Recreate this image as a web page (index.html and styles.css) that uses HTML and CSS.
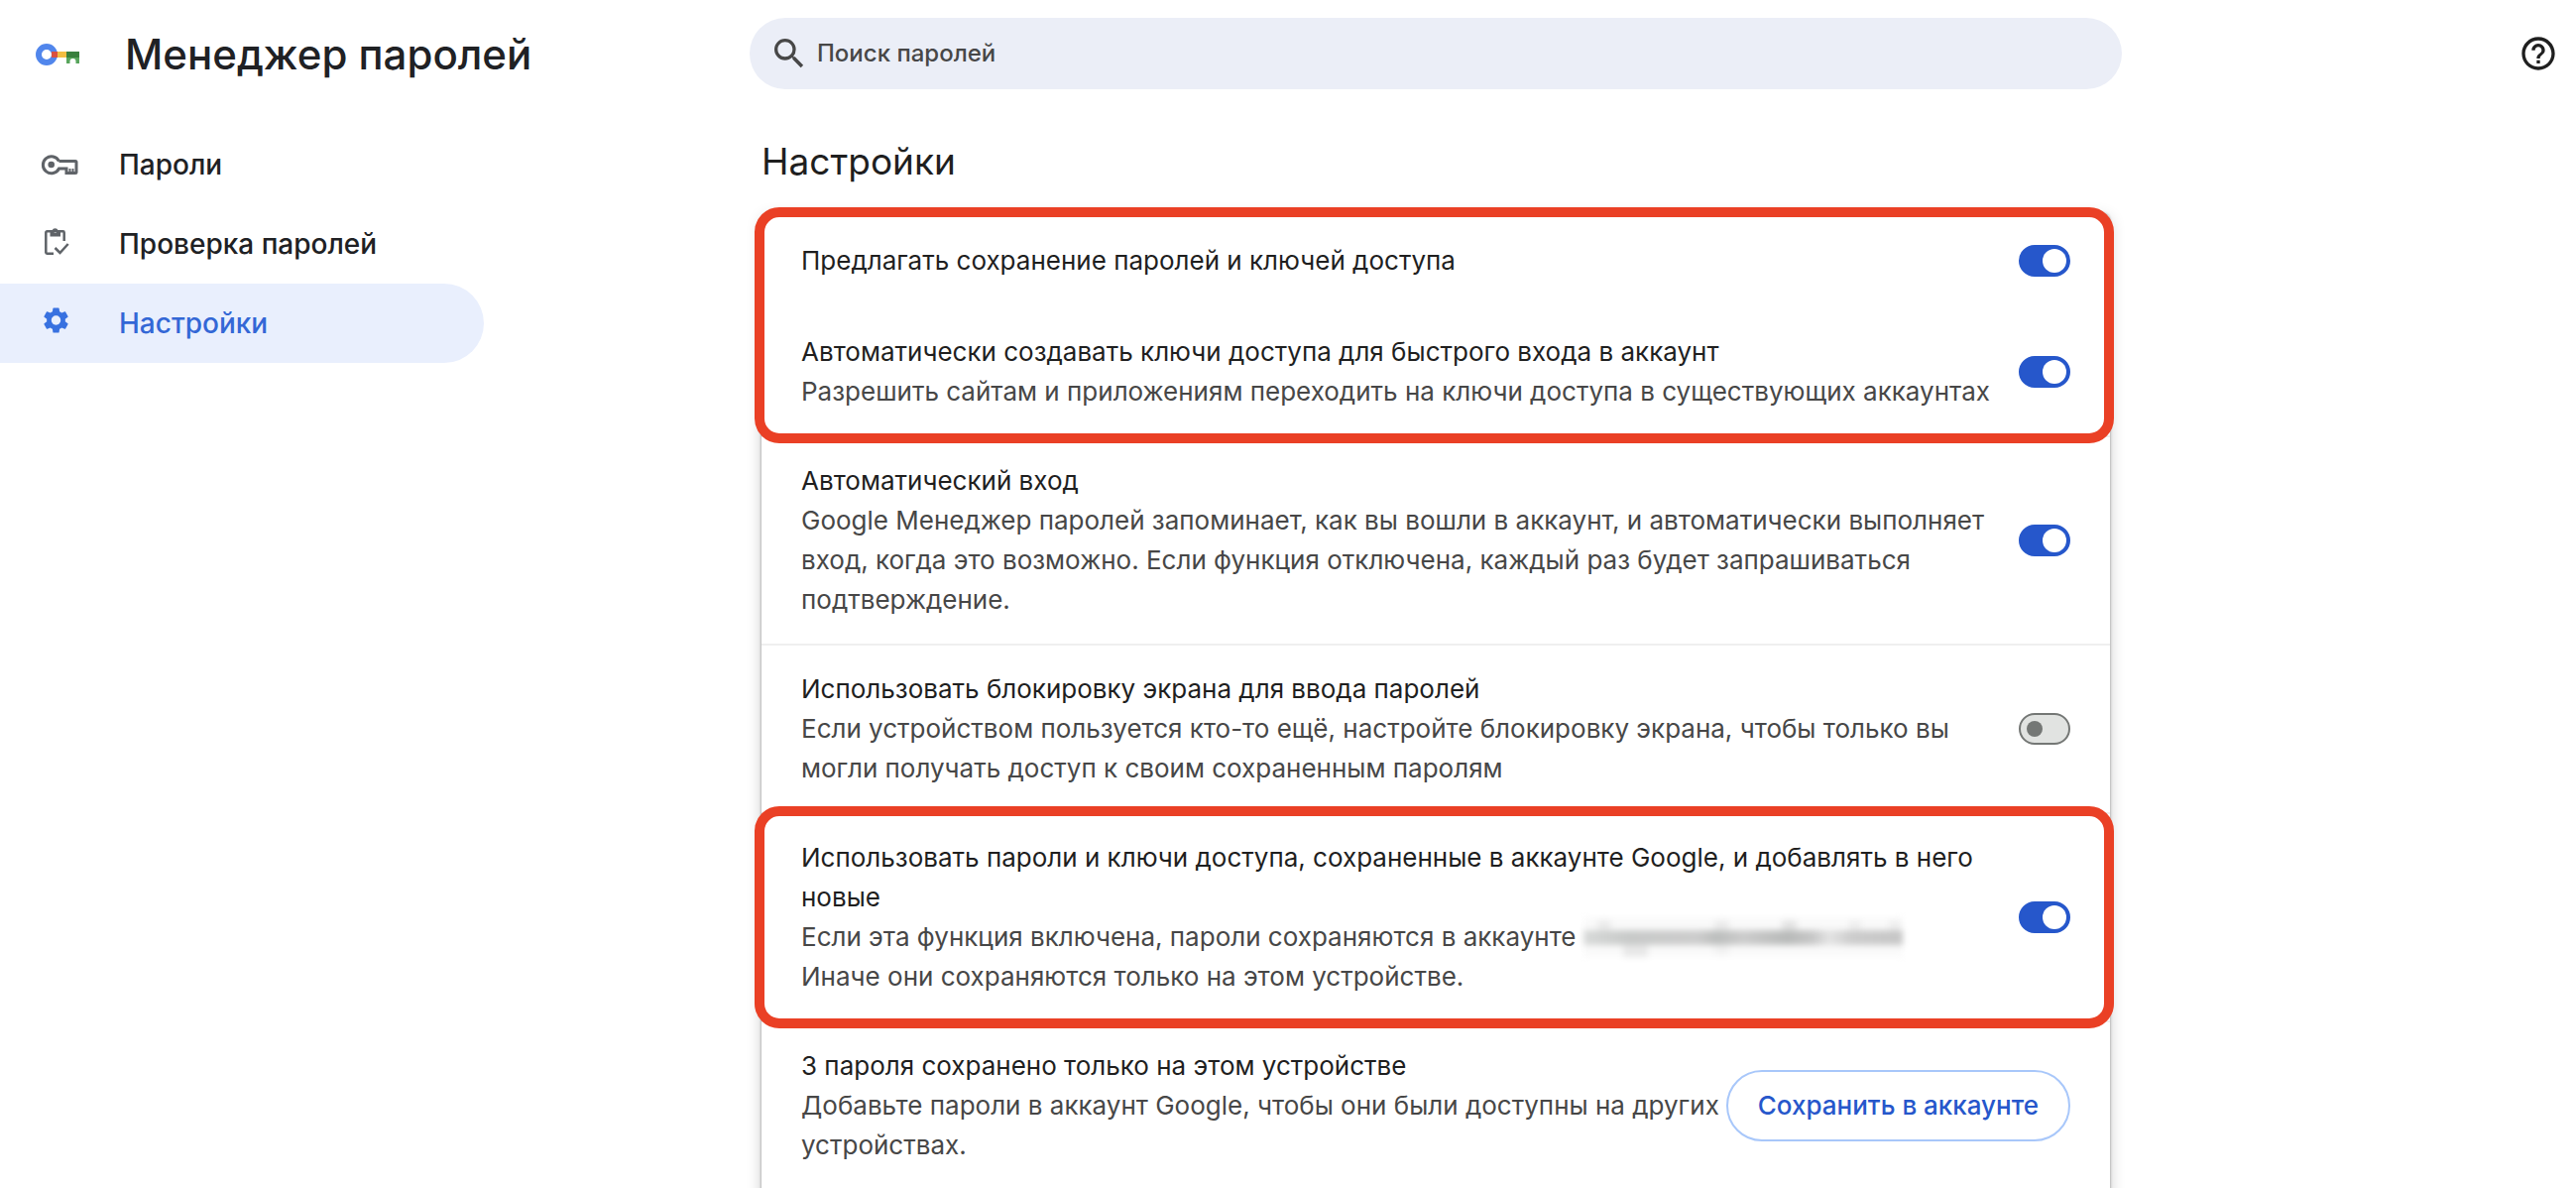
FILE: index.html
```html
<!DOCTYPE html>
<html lang="ru">
<head>
    <meta charset="UTF-8">
    <meta name="viewport" content="width=device-width, initial-scale=1.0">
    <title>Менеджер паролей</title>
    <link rel="stylesheet" href="styles.css">
</head>
<body>
    <header class="toolbar">
        <div class="brand">
            <svg class="logo" viewBox="0 0 44 24" aria-hidden="true">
                <circle cx="11" cy="12" r="8" fill="none" stroke="#5186ec" stroke-width="6"/>
                <path fill="#d95140" d="M16 9h6v6h-6z"/>
                <path fill="#f2bd42" d="M22 9h9.500v6H22z"/>
                <path fill="#397f3d" d="M31 9h13v6H31z"/>
                <path fill="#58a55c" d="M31 15h13v6h-3.500v-2a3 3 0 0 0-6 0v2H31z"/>
            </svg>
            <h1>Менеджер паролей</h1>
        </div>
        <label class="search">
            <svg class="icon" viewBox="0 0 24 24" aria-hidden="true">
                <path fill="#474747" d="M15.500 14h-.79l-.28-.27A6.470 6.470 0 0 0 16 9.500 6.500 6.500 0 1 0 9.500 16c1.610 0 3.090-.59 4.230-1.570l.27.28v.79l5 4.990L20.490 19l-4.990-5zm-6 0C7.010 14 5 11.990 5 9.500S7.010 5 9.500 5 14 7.010 14 9.500 11.990 14 9.500 14z"/>
            </svg>
            <input type="search" placeholder="Поиск паролей" aria-label="Поиск паролей">
        </label>
        <button type="button" class="help" aria-label="Справка">
            <svg class="icon" viewBox="0 0 24 24" aria-hidden="true">
                <path fill="#1f1f1f" d="M11 18h2v-2h-2v2zm1-16C6.480 2 2 6.480 2 12s4.480 10 10 10 10-4.480 10-10S17.520 2 12 2zm0 18c-4.410 0-8-3.590-8-8s3.590-8 8-8 8 3.590 8 8-3.590 8-8 8zm0-14c-2.210 0-4 1.790-4 4h2c0-1.100.9-2 2-2s2 .9 2 2c0 2-3 1.750-3 5h2c0-2.250 3-2.500 3-5 0-2.210-1.790-4-4-4z"/>
            </svg>
        </button>
    </header>

    <div class="layout">
        <nav class="sidebar">
            <a href="#passwords">
                <svg class="icon" viewBox="0 0 40 40" aria-hidden="true">
                    <g fill="none" stroke="#5f6368" stroke-width="3">
                        <path d="M19.500 16.500H36a1 1 0 0 1 1 1v10a1 1 0 0 1-1 1H27V24h-7.500A8.500 8.500 0 1 1 19.500 16.500"/>
                        <path stroke-width="2" d="M30.500 24v4M33.500 24v4"/>
                    </g>
                    <circle cx="11.700" cy="20" r="3.300" fill="#5f6368"/>
                </svg>
                Пароли
            </a>
            <a href="#checkup">
                <svg class="icon" viewBox="0 0 40 40" aria-hidden="true">
                    <path fill="none" stroke="#5f6368" stroke-width="2.500" d="M14 29.800H7.500a1.200 1.200 0 0 1-1.200-1.200V8.500a1.200 1.200 0 0 1 1.200-1.200h16a1.200 1.200 0 0 1 1.200 1.200V17M15.500 24l5 5 8.200-9"/>
                    <path fill="#5f6368" fill-rule="evenodd" d="M10.500 6.500h2a3.300 3.300 0 0 1 6.200 0h2.300v6H10.500zM15.600 6a1.500 1.500 0 1 0 .1 3 1.500 1.500 0 0 0-.1-3"/>
                </svg>
                Проверка паролей
            </a>
            <a href="#settings" class="selected">
                <svg class="icon" viewBox="0 0 40 40" aria-hidden="true">
                    <path fill="#3871e0" transform="translate(.9 1.400) scale(1.300)" d="M19.140 12.940c.04-.3.06-.61.06-.94 0-.32-.02-.64-.07-.94l2.030-1.580c.18-.14.23-.41.12-.61l-1.920-3.320c-.12-.22-.37-.29-.59-.22l-2.390.96c-.5-.38-1.030-.7-1.620-.94l-.36-2.540c-.04-.24-.24-.41-.48-.41h-3.840c-.24 0-.43.17-.47.41l-.36 2.540c-.59.24-1.130.57-1.620.94l-2.390-.96c-.22-.08-.47 0-.59.22L2.740 8.870c-.12.21-.08.47.12.61l2.030 1.580c-.05.3-.09.63-.09.94s.02.64.07.94l-2.030 1.580c-.18.14-.23.41-.12.61l1.920 3.320c.12.22.37.29.59.22l2.390-.96c.5.38 1.030.7 1.620.94l.36 2.540c.05.24.24.41.48.41h3.840c.24 0 .44-.17.47-.41l.36-2.540c.59-.24 1.130-.56 1.620-.94l2.390.96c.22.08.47 0 .59-.22l1.920-3.320c.12-.22.07-.47-.12-.61l-2.010-1.580zM12 15.600c-1.980 0-3.600-1.620-3.600-3.600s1.620-3.600 3.600-3.600 3.600 1.620 3.600 3.600-1.620 3.600-3.600 3.600z"/>
                </svg>
                Настройки
            </a>
        </nav>

        <main class="content">
            <h2>Настройки</h2>
            <div class="card">
                <div class="highlight">
                    <label class="row">
                        <span class="text"><span class="title">Предлагать сохранение паролей и ключей доступа</span></span>
                        <input type="checkbox" class="toggle" checked>
                    </label>
                    <label class="row">
                        <span class="text">
                            <span class="title">Автоматически создавать ключи доступа для быстрого входа в аккаунт</span>
                            <span class="sub">Разрешить сайтам и приложениям переходить на ключи доступа в существующих аккаунтах</span>
                        </span>
                        <input type="checkbox" class="toggle" checked>
                    </label>
                </div>
                <label class="row divided">
                    <span class="text">
                        <span class="title">Автоматический вход</span>
                        <span class="sub">Google Менеджер паролей запоминает, как вы вошли в аккаунт, и автоматически выполняет вход, когда это возможно. Если функция отключена, каждый раз будет запрашиваться подтверждение.</span>
                    </span>
                    <input type="checkbox" class="toggle" checked>
                </label>
                <label class="row divided">
                    <span class="text">
                        <span class="title">Использовать блокировку экрана для ввода паролей</span>
                        <span class="sub">Если устройством пользуется кто-то ещё, настройте блокировку экрана, чтобы только вы могли получать доступ к своим сохраненным паролям</span>
                    </span>
                    <input type="checkbox" class="toggle">
                </label>
                <div class="highlight">
                    <label class="row divided">
                        <span class="text">
                            <span class="title">Использовать пароли и ключи доступа, сохраненные в аккаунте Google, и добавлять в него новые</span>
                            <span class="sub">Если эта функция включена, пароли сохраняются в аккаунте <span class="redacted"></span><br>Иначе они сохраняются только на этом устройстве.</span>
                        </span>
                        <input type="checkbox" class="toggle" checked>
                    </label>
                </div>
                <div class="row divided with-button">
                    <span class="text">
                        <span class="title">3 пароля сохранено только на этом устройстве</span>
                        <span class="sub">Добавьте пароли в аккаунт Google, чтобы они были доступны на других устройствах.</span>
                    </span>
                    <button type="button" class="save">Сохранить в аккаунте</button>
                </div>
            </div>
        </main>
    </div>
</body>
</html>
```

FILE: styles.css
```css
* {
    box-sizing: border-box;
}

body {
    margin: 0;
    height: 100vh;
    overflow: hidden;
    display: flex;
    flex-direction: column;
    background: #ffffff;
    color: #1f1f1f;
    font-family: Inter, "Liberation Sans", sans-serif;
    font-size: 26px;
    line-height: 40px;
}

.icon {
    width: 40px;
    height: 40px;
    flex: none;
}

.toolbar,
.layout {
    display: grid;
    grid-template-columns: 756px minmax(0, 1384px) 1fr;
}

.toolbar {
    height: 108px;
    align-items: center;
}

.brand {
    display: flex;
    align-items: center;
    gap: 46px;
    padding: 2px 0 0 36px;
}

.logo {
    width: 44px;
    height: 24px;
}

h1 {
    margin: 0;
    font-size: 42px;
    font-weight: 500;
    color: #202124;
}

.search {
    display: flex;
    align-items: center;
    gap: 8px;
    height: 72px;
    padding: 0 20px;
    border-radius: 36px;
    background: #ebeef7;
}

.search input {
    flex: 1;
    padding: 0;
    border: none;
    outline: none;
    background: none;
    font: inherit;
    font-size: 24px;
    font-weight: 500;
    color: #474747;
}

.search input::placeholder {
    color: #474747;
    opacity: 1;
}

.help {
    justify-self: end;
    display: flex;
    margin-right: 18px;
    padding: 0;
    border: none;
    background: none;
    cursor: pointer;
}

.layout {
    flex: 1;
    min-height: 0;
}

.sidebar {
    padding-top: 18px;
}

.sidebar a {
    display: flex;
    align-items: center;
    gap: 40px;
    width: 488px;
    height: 80px;
    padding-left: 40px;
    border-radius: 0 40px 40px 0;
    font-size: 28px;
    font-weight: 500;
    color: #202124;
    text-decoration: none;
}

.sidebar .selected {
    background: #e9effd;
    color: #3367d6;
}

.content {
    display: flex;
    flex-direction: column;
    padding: 35px 12px 0;
}

h2 {
    margin: 0 0 32px;
    font-size: 37px;
    font-weight: 400;
}

.card {
    flex: 1 0 auto;
    padding-bottom: 24px;
    border-radius: 8px;
    background: #ffffff;
    box-shadow: 0 0 3px rgba(0, 0, 0, 0.4), 0 4px 16px rgba(0, 0, 0, 0.2);
}

.row {
    display: flex;
    align-items: center;
    gap: 24px;
    min-height: 96px;
    padding: 24px 40px;
}

.divided {
    border-top: 2px solid #efefef;
}

.with-button {
    gap: 0;
}

.text {
    flex: 1;
    min-width: 0;
}

.title,
.sub {
    display: block;
}

.sub {
    color: #474747;
}

/* red frame drawn over the card edges */
.highlight {
    position: relative;
}

.highlight::after {
    content: "";
    position: absolute;
    inset: -6px -4px -8px -7px;
    border: 10px solid #ea4025;
    border-radius: 25px;
    pointer-events: none;
}

.toggle {
    appearance: none;
    flex: none;
    display: flex;
    align-items: center;
    width: 52px;
    height: 32px;
    margin: 0;
    padding: 0 6px;
    border: 2px solid #747775;
    border-radius: 16px;
    background: #e1e3e1;
    cursor: pointer;
}

.toggle::before {
    content: "";
    width: 16px;
    height: 16px;
    border-radius: 50%;
    background: #747775;
}

.toggle:checked {
    justify-content: flex-end;
    padding: 0 2px;
    border-color: #2657cb;
    background: #2657cb;
}

.toggle:checked::before {
    width: 24px;
    height: 24px;
    background: #ffffff;
}

/* hidden e-mail: one band with faint ascenders and descenders */
.redacted {
    display: inline-block;
    vertical-align: top;
    width: 322px;
    height: 40px;
    background:
        linear-gradient(90deg, #d8dad9, #c8cac9 14%, #cccccc 36%, #bcbebd 42%, #cccccc 50%, #b8bab9 64%, #c8c8c8 72%, #e4e4e4 77%, #cccccc 84%, #c6c6c6) 0 13px / 322px 15px no-repeat,
        linear-gradient(#ececec, #ececec) 14px 3px / 14px 12px no-repeat,
        linear-gradient(#ececec, #ececec) 132px 3px / 15px 12px no-repeat,
        linear-gradient(#e4e4e4, #e4e4e4) 200px 3px / 15px 12px no-repeat,
        linear-gradient(#efefef, #efefef) 268px 3px / 12px 12px no-repeat,
        linear-gradient(#efefef, #efefef) 308px 3px / 12px 12px no-repeat,
        linear-gradient(#e8e8e8, #e8e8e8) 40px 26px / 25px 14px no-repeat,
        linear-gradient(#f2f2f2, #f2f2f2) 132px 26px / 15px 12px no-repeat,
        #fafafa;
    filter: blur(3px);
}

.save {
    flex: none;
    height: 72px;
    padding: 0 30px;
    border: 2px solid #a8c7fa;
    border-radius: 36px;
    background: #ffffff;
    color: #2657cb;
    font: inherit;
    font-weight: 500;
    cursor: pointer;
}
```
